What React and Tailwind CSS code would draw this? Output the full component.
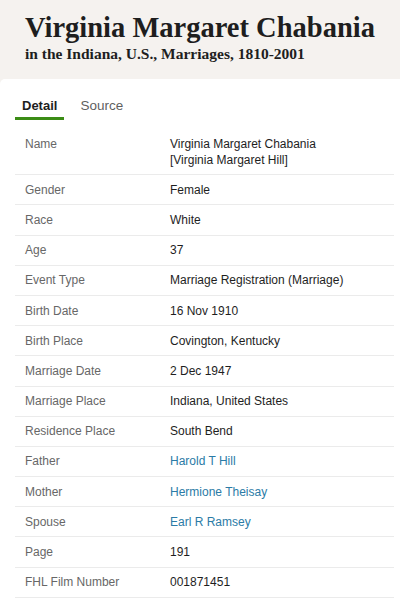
const rows = [
  { label: 'Name', value: ['Virginia Margaret Chabania', '[Virginia Margaret Hill]'] },
  { label: 'Gender', value: 'Female' },
  { label: 'Race', value: 'White' },
  { label: 'Age', value: '37' },
  { label: 'Event Type', value: 'Marriage Registration (Marriage)' },
  { label: 'Birth Date', value: '16 Nov 1910' },
  { label: 'Birth Place', value: 'Covington, Kentucky' },
  { label: 'Marriage Date', value: '2 Dec 1947' },
  { label: 'Marriage Place', value: 'Indiana, United States' },
  { label: 'Residence Place', value: 'South Bend' },
  { label: 'Father', value: 'Harold T Hill', link: true },
  { label: 'Mother', value: 'Hermione Theisay', link: true },
  { label: 'Spouse', value: 'Earl R Ramsey', link: true },
  { label: 'Page', value: '191' },
  { label: 'FHL Film Number', value: '001871451' },
];

export default function App() {
  return (
    <div className="w-[400px] h-[604px] overflow-hidden bg-[#f5f2ef] font-['Liberation_Sans',Arial,sans-serif]">
      <header className="px-[25px] pt-[12px] pb-[15px] text-[#1e1e1e] font-['Liberation_Serif','Times_New_Roman',serif] font-bold">
        <h1 className="text-[28.5px] leading-[32px]">Virginia Margaret Chabania</h1>
        <p className="text-[15.5px] leading-[20px]">in the Indiana, U.S., Marriages, 1810-2001</p>
      </header>

      <div className="bg-white rounded-tl-[5px] pl-[15px] pr-[6px] h-full">
        <div className="flex pt-[19px]">
          <button className="px-[7px] pb-[3px] border-b-[3px] border-[#3b8c15] text-[13px] leading-[16px] font-bold text-[#1e1e1e]">Detail</button>
          <button className="ml-[9px] px-[7px] pb-[3px] border-b-[3px] border-transparent text-[13.5px] leading-[16px] text-[#5f5f5f]">Source</button>
        </div>

        <dl className="mt-[9px]">
          {rows.map(r => (
            <div key={r.label} className="flex py-[6.6px] border-b border-[#ebebeb] text-[12px] leading-[16px]">
              <dt className="w-[155px] pl-[10px] text-[#676767]">{r.label}</dt>
              <dd className={r.link ? 'text-[#2b7ba6]' : 'text-[#1e1e1e]'}>
                {Array.isArray(r.value) ? r.value.map(v => <div key={v}>{v}</div>) : r.value}
              </dd>
            </div>
          ))}
        </dl>
      </div>
    </div>
  );
}
